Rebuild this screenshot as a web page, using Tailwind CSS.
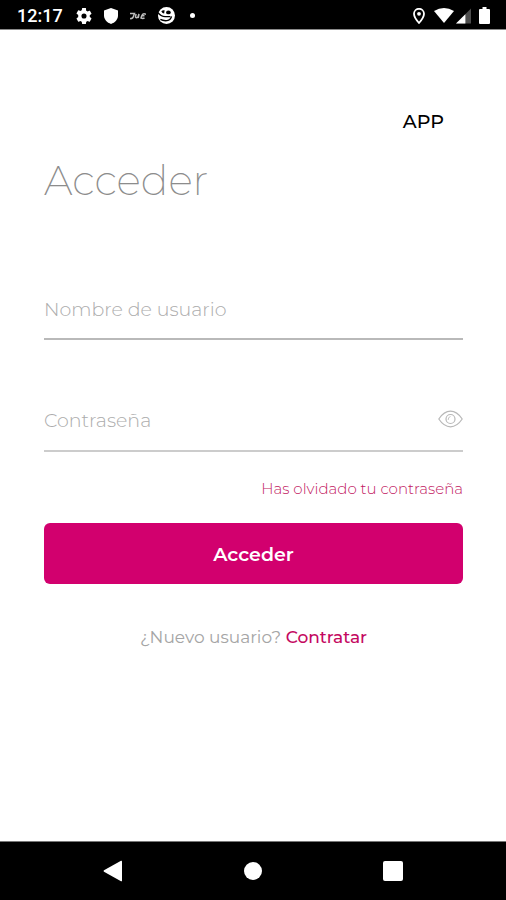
<!DOCTYPE html>
<html lang="es">
<head>
<meta charset="utf-8">
<meta name="viewport" content="width=device-width, initial-scale=1">
<title>Acceder</title>
<script src="https://cdn.jsdelivr.net/npm/@tailwindcss/browser@4"></script>
</head>
<body class="flex min-h-screen flex-col bg-white font-['Montserrat','Inter',sans-serif]">
<header class="flex h-[30px] items-center justify-between border-b border-[#8a8a8a] bg-black pt-0.5 pr-4 pl-[17px] text-white">
  <div class="flex items-center">
    <span class="w-[59px] font-['Roboto',sans-serif] text-lg leading-none font-medium">12:17</span>
    <svg class="size-4" viewBox="2 2 20 20" fill="currentColor" aria-hidden="true"><path d="M19.14 12.94c.04-.3.06-.61.06-.94s-.02-.64-.07-.94l2.03-1.58a.49.49 0 0 0 .12-.61l-1.92-3.32a.49.49 0 0 0-.59-.22l-2.39.96a7 7 0 0 0-1.62-.94l-.36-2.54A.48.48 0 0 0 13.92 2h-3.84a.48.48 0 0 0-.48.41l-.36 2.54a7 7 0 0 0-1.62.94l-2.39-.96a.49.49 0 0 0-.59.22L2.72 8.47a.49.49 0 0 0 .12.61l2.03 1.58a6 6 0 0 0 0 2.68l-2.03 1.58a.49.49 0 0 0-.12.61l1.92 3.32c.12.22.37.29.59.22l2.39-.96c.5.38 1.03.7 1.62.94l.36 2.54c.05.24.24.41.48.41h3.84c.24 0 .44-.17.47-.41l.36-2.54c.59-.24 1.13-.56 1.62-.94l2.39.96c.22.08.47 0 .59-.22l1.92-3.32a.49.49 0 0 0-.12-.61zM12 15.2a3.2 3.2 0 1 1 0-6.4 3.2 3.2 0 0 1 0 6.400z"/></svg>
    <svg class="ml-3 h-4 w-[14px]" viewBox="0 0 14 16" fill="currentColor" aria-hidden="true"><path d="M7 0l7 2.600v5c0 4-3 7.200-7 8.400-4-1.200-7-4.400-7-8.400v-5z"/></svg>
    <svg class="ml-3 h-2 w-4" viewBox="0 0 16 8" fill="none" stroke="#bdbdbd" stroke-width="1.500" aria-hidden="true"><path d="M0 1.500h4.500L3 5.500Q2 7 0 6.500M6 2l-.5 3q1 1.500 2.500 0l1-3-.8 4M16 2.200q-3-1.200-4 1t-1 2.800q2 .8 3.500 0M11.500 3.800h3"/></svg>
    <svg class="ml-3 size-[17px]" viewBox="0 0 18 18" aria-hidden="true"><circle cx="9" cy="9" r="9" fill="white"/><path d="M0 6Q3 10 7.500 10.200h5.500M2.500 13.200q3 1.600 7 1.200 4-.5 4.800-4.400" fill="none" stroke="black" stroke-width="1.500"/><ellipse cx="11" cy="5.800" rx="2.500" ry="2" fill="black"/><path d="M3.500 4.500Q5 3 7 3.500L6.500 7Q4.500 7 3.500 4.500z" fill="black"/></svg>
    <span class="ml-[15px] size-[5px] rounded-full bg-white"></span>
  </div>
  <div class="flex items-center">
    <svg class="h-4 w-3" viewBox="0 0 12 16" fill="none" stroke="currentColor" stroke-width="1.800" aria-hidden="true"><path d="M6 15Q1 9.500 1 5.800a5 5 0 0 1 10 0Q11 9.500 6 15z"/><circle cx="6" cy="5.800" r="1.900" fill="currentColor" stroke="none"/></svg>
    <svg class="ml-[9px] h-[15px] w-5" viewBox="0 0 20 15" fill="currentColor" aria-hidden="true"><path d="M0 3Q10-3 20 3L10 15z"/></svg>
    <svg class="ml-[2px] h-4 w-[15px]" viewBox="0 0 16 16" aria-hidden="true"><path d="M16 0v16H0z" fill="#4d4d4d"/><path d="M10 6v10H0z" fill="white"/></svg>
    <svg class="ml-2 h-[17px] w-[11px]" viewBox="0 0 11 17" fill="currentColor" aria-hidden="true"><path d="M3.500 0h4v2H10q1 0 1 1v13q0 1-1 1H1q-1 0-1-1V3q0-1 1-1h2.500z"/></svg>
  </div>
</header>

<main class="flex grow flex-col pt-20 pr-[43px] pl-11">
  <p class="pr-[19px] text-right text-[19px] leading-6 font-medium text-black">APP</p>
  <h1 class="mt-5 text-[41px] leading-[52px] font-extralight text-[#8c8c8c]">Acceder</h1>
  <form class="mt-[84px] flex flex-col">
    <input type="text" aria-label="Nombre de usuario" placeholder="Nombre de usuario" class="h-[50px] w-full border-b-2 border-[#b9b9b9] pb-2.5 text-[19px] font-light outline-none placeholder:text-[#acacac]">
    <div class="mt-[62px] flex h-[50px] items-center border-b-2 border-[#cccccc] pb-3">
      <input type="password" aria-label="Contraseña" placeholder="Contraseña" class="h-8 min-w-0 grow text-[19px] font-light outline-none placeholder:text-[#acacac]">
      <button type="button" aria-label="Mostrar contraseña" class="pb-0.5">
        <svg class="h-[18px] w-[25px]" viewBox="0 0 25 18" fill="none" stroke="#b8b8b8" stroke-width="1.200" aria-hidden="true"><path d="M.8 9Q6 1.200 12.500 1.200T24.200 9Q19 16.800 12.500 16.800T.8 9z"/><circle cx="12.500" cy="9" r="4.500"/><path d="M12.500 6.500Q10 7 10.200 10" stroke-width=".8"/></svg>
      </button>
    </div>
    <a href="#" class="mt-[27px] self-end text-[15px] leading-5 font-light text-[#c2185f]">Has olvidado tu contraseña</a>
    <button type="submit" class="mt-6 h-[61px] rounded-md bg-[#d2006e] pt-1 text-[19px] font-semibold text-white">Acceder</button>
  </form>
  <p class="mt-[41px] text-center text-[17px] leading-6 text-[#a5a5a5]">¿Nuevo usuario? <a href="#" class="font-medium text-[#c4085f]">Contratar</a></p>
</main>

<nav class="flex h-[59px] items-center justify-around border-t border-[#777777] bg-black px-[43px] text-white">
  <button type="button" aria-label="Atrás"><svg class="h-[22px] w-5" viewBox="0 0 20 22" fill="currentColor"><path d="M18 .8q1-.5 1 .7v19q0 1.200-1 .7L1 11.700q-1-.7 0-1.400z"/></svg></button>
  <button type="button" aria-label="Inicio" class="size-[18px] rounded-full bg-white"></button>
  <button type="button" aria-label="Recientes" class="size-5 rounded-xs bg-white"></button>
</nav>
</body>
</html>
